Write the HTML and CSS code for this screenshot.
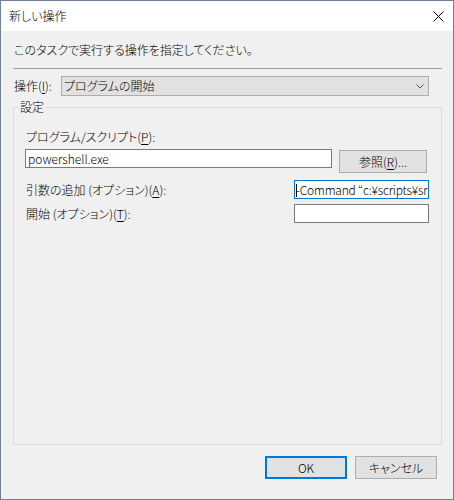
FILE: index.html
```html
<!DOCTYPE html>
<html lang="ja">

<head>
    <meta charset="UTF-8">
    <title>新しい操作</title>
    <link rel="stylesheet" href="styles.css">
</head>

<body>

    <div class="dialog">
        <div class="titlebar">
            <span class="title">新しい操作</span>
            <svg class="close" width="11" height="11" viewBox="0 0 11 11">
                <path d="M0.5 0.5 L10.5 10.5 M10.5 0.5 L0.5 10.5" stroke="#000" stroke-width="1" fill="none"/>
            </svg>
        </div>

        <div class="conteudo">
            <div class="intro">このタスクで実行する操作を指定してください。</div>
            <div class="sep"></div>

            <div class="acao">
                <span class="acao-label">操作(<u>I</u>):</span>
                <div class="combo">
                    <span>プログラムの開始</span>
                    <svg width="8" height="5" viewBox="0 0 8 5">
                        <path d="M0.5 0.5 L4 4 L7.5 0.5" stroke="#5a5a5a" stroke-width="1" fill="none"/>
                    </svg>
                </div>
            </div>

            <fieldset class="grupo">
                <legend>設定</legend>
                <div class="campos">
                    <div class="rotulo">プログラム/スクリプト(<u>P</u>):</div>
                    <div class="linha linha-programa">
                        <div class="caixa caixa-longa">powershell.exe</div>
                        <div class="botao botao-ref">参照(<u>R</u>)...</div>
                    </div>
                    <div class="linha linha-arg">
                        <span class="rotulo">引数の追加 (オプション)(<u>A</u>):</span>
                        <div class="caixa caixa-curta foco"><span class="cursor"></span>-Command “c:¥scripts¥sr</div>
                    </div>
                    <div class="linha linha-inicio">
                        <span class="rotulo">開始 (オプション)(<u>T</u>):</span>
                        <div class="caixa caixa-curta"></div>
                    </div>
                </div>
            </fieldset>
        </div>

        <div class="rodape">
            <div class="botao botao-ok">OK</div>
            <div class="botao">キャンセル</div>
        </div>
    </div>

</body>

</html>
```

FILE: styles.css
```css
body {
    margin: 0;
    font-family: "Noto Sans CJK JP", sans-serif;
    font-size: 12px;
    font-weight: 300;
    color: #000;
    font-feature-settings: "palt";
}

u {
    text-decoration-thickness: 1px;
    text-underline-offset: 2px;
}

.dialog {
    width: 454px;
    height: 500px;
    box-sizing: border-box;
    border: 1px solid #70809a;
    background-color: #f0f0f0;
    display: flex;
    flex-direction: column;
}

.titlebar {
    height: 30px;
    flex-shrink: 0;
    background-color: #fff;
    display: flex;
    align-items: center;
    justify-content: space-between;
    padding: 0 9px 0 8px;
}

.title {
    line-height: 16px;
}

.conteudo {
    flex: 1;
    display: flex;
    flex-direction: column;
    padding: 0 11px 0 12px;
}

.intro {
    margin-top: 11px;
    line-height: 16px;
    padding-left: 1px;
}

.sep {
    margin-top: 10px;
    height: 1px;
    background-color: #a0a0a0;
}

.acao {
    margin-top: 7px;
    display: flex;
    align-items: center;
    height: 20px;
}

.acao-label {
    width: 48px;
    padding-left: 1px;
    box-sizing: border-box;
    line-height: 16px;
}

.combo {
    width: 368px;
    height: 20px;
    box-sizing: border-box;
    border: 1px solid #adadad;
    background-color: #e1e1e1;
    display: flex;
    align-items: center;
    justify-content: space-between;
    padding: 0 4px 0 2px;
    line-height: 16px;
}

.grupo {
    flex: 1;
    margin: 3px 0 0;
    padding: 0;
    border: 1px solid #dcdcdc;
    min-width: 0;
}

.grupo legend {
    margin-left: 4px;
    padding: 0 2px;
    line-height: 16px;
}

.campos {
    padding: 14px 12px 0 11px;
}

.rotulo {
    line-height: 16px;
    padding-left: 1px;
}

.linha {
    display: flex;
}

.linha-programa {
    margin-top: 4px;
    gap: 7px;
    align-items: flex-start;
}

.linha-arg {
    margin-top: 7px;
    align-items: center;
    justify-content: space-between;
}

.linha-inicio {
    margin-top: 5px;
    align-items: center;
    justify-content: space-between;
}

.caixa {
    height: 19px;
    box-sizing: border-box;
    border: 1px solid #7a7a7a;
    background-color: #fff;
    line-height: 17px;
    padding-left: 2px;
    white-space: nowrap;
    overflow: hidden;
}

.caixa-longa {
    width: 307px;
}

.caixa-curta {
    width: 135px;
}

.foco {
    border-color: #0078d7;
    padding-left: 1px;
    letter-spacing: -0.2px;
}

.cursor {
    display: inline-block;
    width: 0;
    height: 13px;
    border-left: 1px solid #000;
    vertical-align: -2px;
    margin-right: -1px;
}

.botao {
    width: 82px;
    height: 23px;
    box-sizing: border-box;
    border: 1px solid #adadad;
    background-color: #e1e1e1;
    display: flex;
    align-items: center;
    justify-content: center;
    line-height: 16px;
}

.botao-ref {
    width: 88px;
    margin-top: 1px;
}

.botao-ok {
    border: 2px solid #0078d7;
}

.rodape {
    flex-shrink: 0;
    display: flex;
    justify-content: flex-end;
    gap: 8px;
    padding: 11px 16px 20px 0;
}
```
